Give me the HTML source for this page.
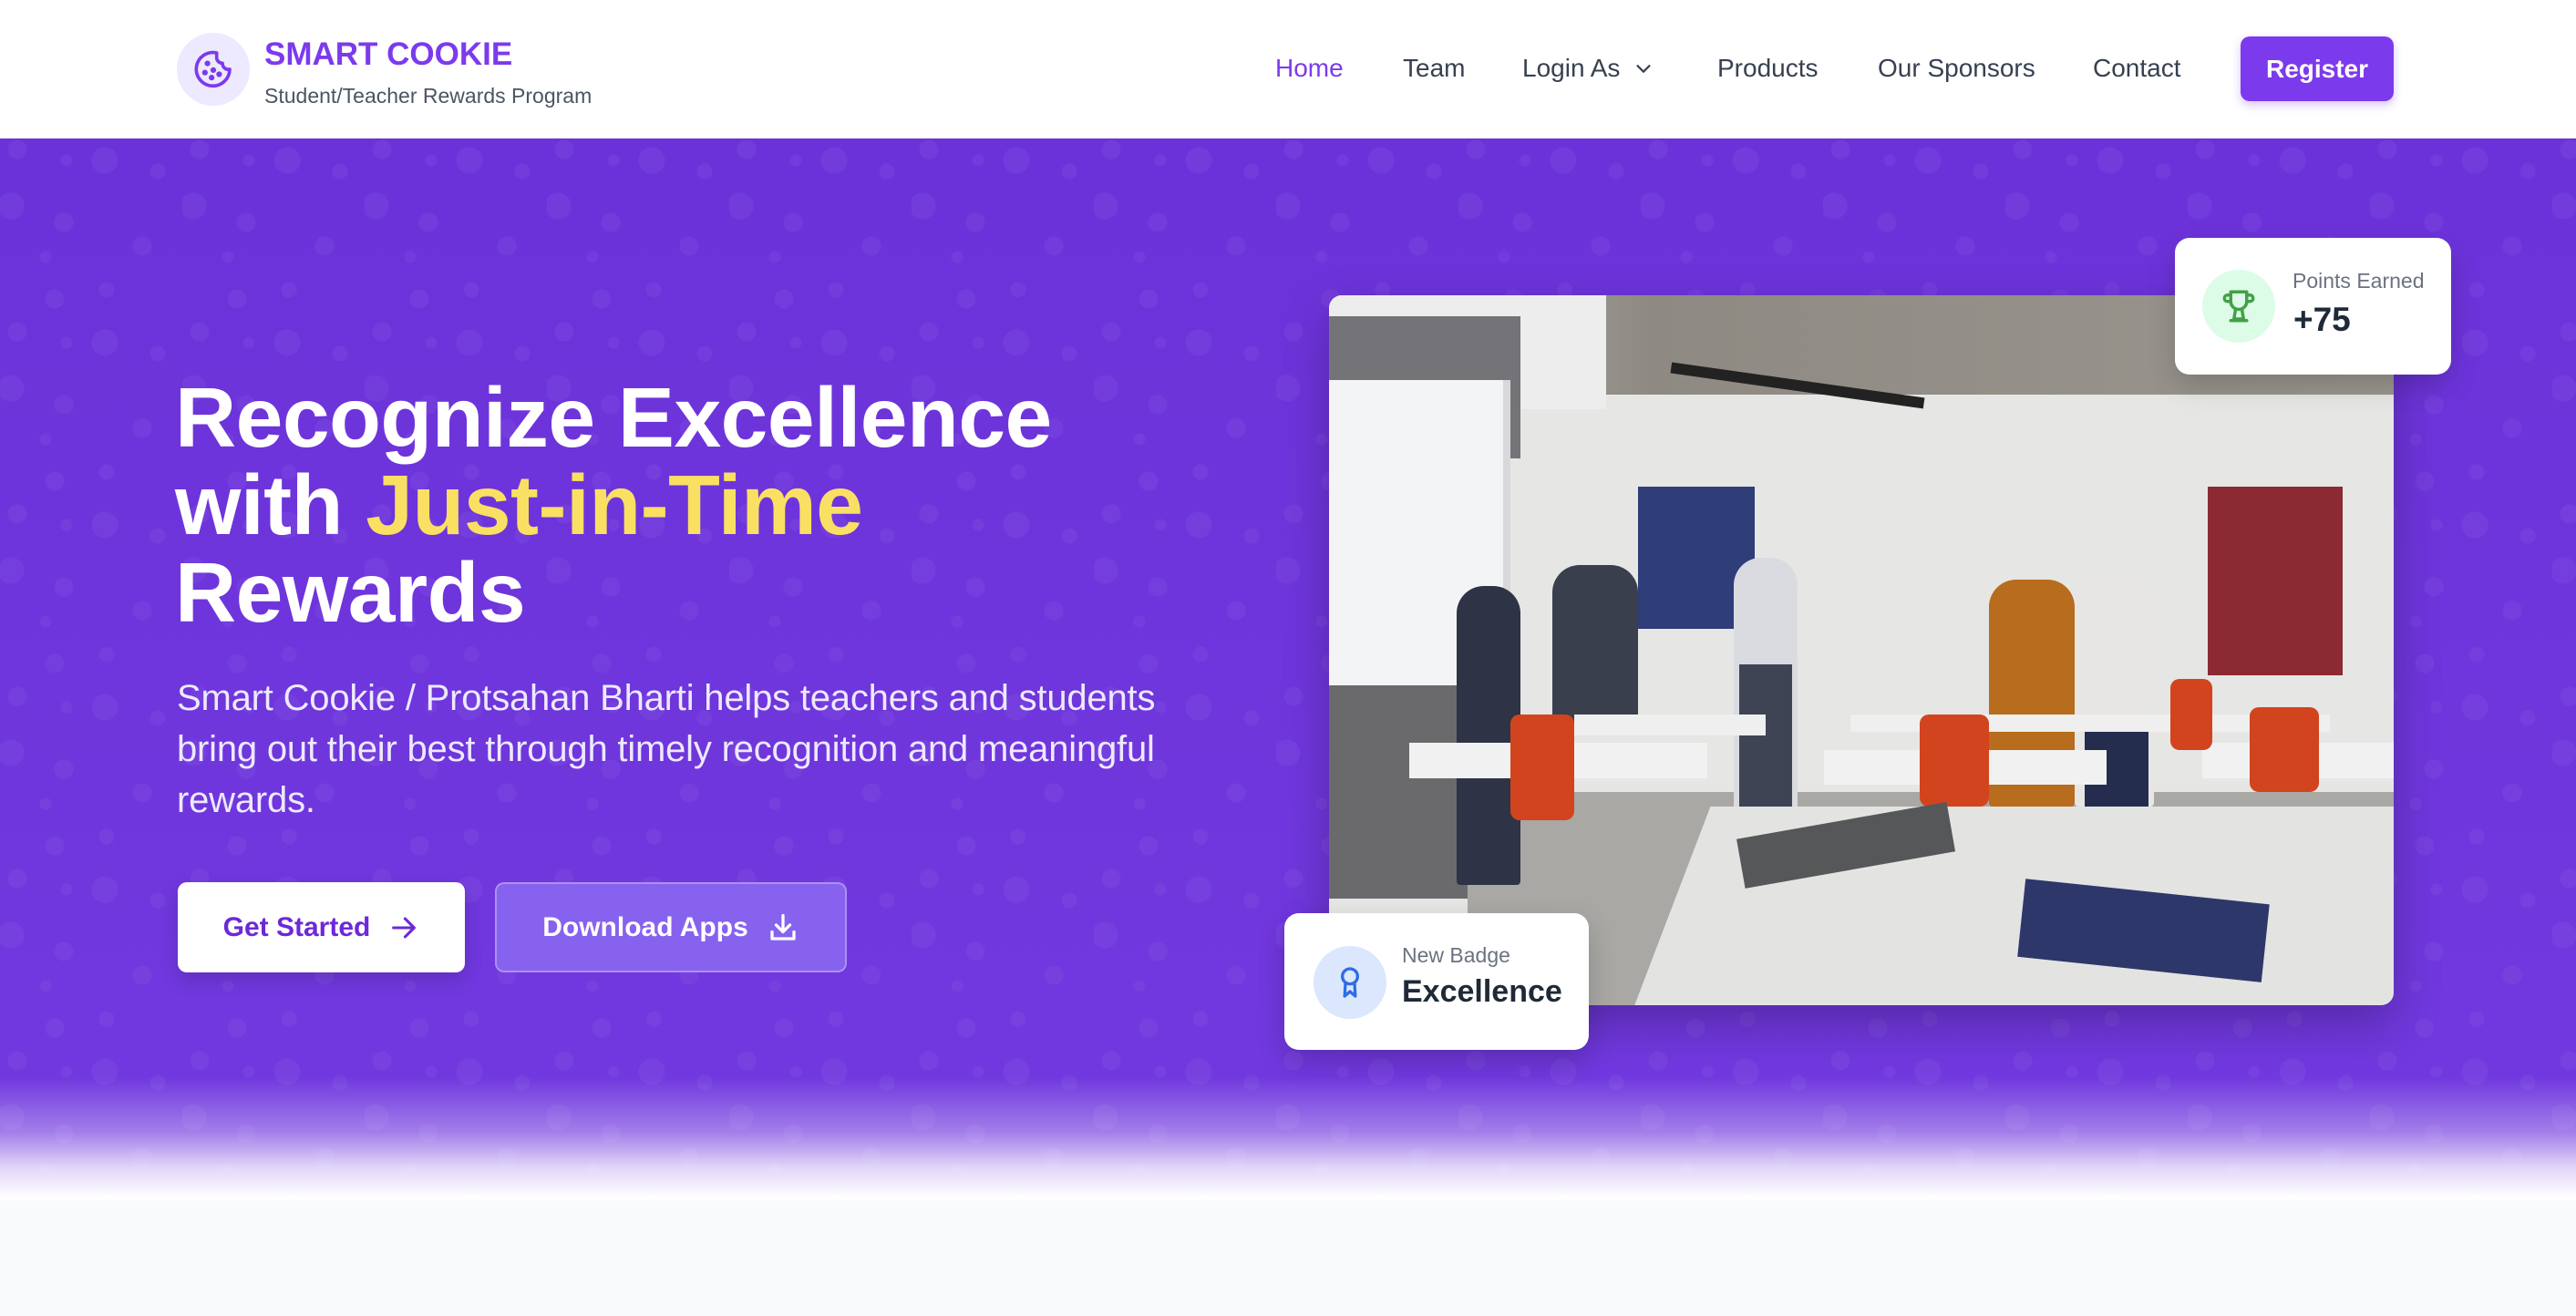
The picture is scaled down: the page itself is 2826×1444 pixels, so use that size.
<!DOCTYPE html>
<html><head><meta charset="utf-8"><style>
*{margin:0;padding:0;box-sizing:border-box}
body{width:2826px;height:1444px;overflow:hidden;background:#f9fafb;font-family:"Liberation Sans",sans-serif;position:relative}
.hdr{position:absolute;left:0;top:0;width:2826px;height:152px;background:#fff;border-bottom:1px solid #eee;z-index:5}
.hero{position:absolute;left:0;top:152px;width:2826px;height:1165px;
background:linear-gradient(180deg,rgba(255,255,255,0) 0px,rgba(255,255,255,0) 1030px,rgba(255,255,255,.35) 1090px,rgba(255,255,255,.8) 1130px,#fff 1162px),
radial-gradient(circle at 19px 12px,rgba(255,255,255,.045) 10px,transparent 11px),
radial-gradient(circle at 73px 24px,rgba(255,255,255,.045) 6px,transparent 7px),
radial-gradient(circle at 115px 24px,rgba(255,255,255,.045) 14px,transparent 15px),
radial-gradient(circle at 173px 36px,rgba(255,255,255,.045) 8px,transparent 9px),
radial-gradient(circle at 12px 74px,rgba(255,255,255,.045) 14px,transparent 15px),
radial-gradient(circle at 70px 92px,rgba(255,255,255,.045) 10px,transparent 11px),
radial-gradient(circle at 156px 118px,rgba(255,255,255,.045) 10px,transparent 11px),
radial-gradient(circle at 50px 130px,rgba(255,255,255,.045) 6px,transparent 7px),
radial-gradient(circle at 117px 166px,rgba(255,255,255,.045) 8px,transparent 9px),
radial-gradient(circle at 60px 176px,rgba(255,255,255,.045) 10px,transparent 11px),
linear-gradient(180deg,#6c32d9,#7139df);
background-size:100% 100%,200px 200px,200px 200px,200px 200px,200px 200px,200px 200px,200px 200px,200px 200px,200px 200px,200px 200px,200px 200px,100% 100%}
.a{position:absolute}
.nav{position:absolute;top:58px;font-size:28px;color:#374151;line-height:34px;white-space:nowrap}
h1{position:absolute;left:192px;top:410px;font-size:93px;line-height:96px;color:#fff;font-weight:bold;white-space:nowrap;letter-spacing:-0.5px}
.p{position:absolute;left:194px;top:738px;font-size:40px;line-height:56px;color:#ede9fe;white-space:nowrap;letter-spacing:-0.2px}
.btn{position:absolute;top:968px;height:99px;border-radius:10px;font-size:30px;font-weight:bold;display:flex;align-items:center;justify-content:center;gap:20px}
.card{position:absolute;background:#fff;border-radius:16px;box-shadow:0 12px 30px rgba(0,0,0,.18);z-index:3}
.img{position:absolute;left:1458px;top:324px;width:1168px;height:779px;border-radius:14px;overflow:hidden;background:#e6e6e4;box-shadow:0 20px 50px rgba(0,0,0,.25)}
.img div{position:absolute}
</style></head><body>
<div class="hdr">
 <div class="a" style="left:194px;top:36px;width:80px;height:80px;border-radius:50%;background:#ede9fe"></div>
 <svg class="a" style="left:212px;top:54px" width="44" height="44" viewBox="0 0 24 24" fill="none" stroke="#7c3aed" stroke-width="2" stroke-linecap="round" stroke-linejoin="round"><path d="M14 2.2A10 10 0 1 0 21.8 12a3.5 3.5 0 0 1-4.3-3.6A3.5 3.5 0 0 1 14 4.5z"/><circle cx="8.5" cy="8.5" r=".7" fill="#7c3aed"/><circle cx="15.5" cy="15" r=".7" fill="#7c3aed"/><circle cx="12" cy="12.5" r=".7" fill="#7c3aed"/><circle cx="11" cy="17" r=".7" fill="#7c3aed"/><circle cx="7" cy="14" r=".7" fill="#7c3aed"/></svg>
 <div class="a" style="left:290px;top:40px;font-size:35px;font-weight:bold;color:#7c3aed;line-height:40px">SMART COOKIE</div>
 <div class="a" style="left:290px;top:90px;font-size:23px;color:#4b5563;line-height:30px">Student/Teacher Rewards Program</div>
 <div class="nav" style="left:1399px;color:#7c3aed">Home</div>
 <div class="nav" style="left:1539px">Team</div>
 <div class="nav" style="left:1670px">Login As</div>
 <svg class="a" style="left:1792px;top:64px" width="22" height="22" viewBox="0 0 24 24" fill="none" stroke="#374151" stroke-width="2.5" stroke-linecap="round"><path d="M5 9l7 7 7-7"/></svg>
 <div class="nav" style="left:1884px">Products</div>
 <div class="nav" style="left:2060px">Our Sponsors</div>
 <div class="nav" style="left:2296px">Contact</div>
 <div class="a" style="left:2458px;top:40px;width:168px;height:71px;border-radius:10px;background:#7c3aed;color:#fff;font-size:28px;font-weight:bold;display:flex;align-items:center;justify-content:center;box-shadow:0 4px 10px rgba(124,58,237,.3)">Register</div>
</div>
<div class="hero"></div>
<h1>Recognize Excellence<br>with <span style="color:#f9e063">Just-in-Time</span><br>Rewards</h1>
<div class="p">Smart Cookie / Protsahan Bharti helps teachers and students<br>bring out their best through timely recognition and meaningful<br>rewards.</div>
<div class="btn" style="left:195px;width:315px;background:#fff;color:#6d28d9;box-shadow:0 8px 20px rgba(0,0,0,.15)">Get Started <svg width="34" height="34" viewBox="0 0 24 24" fill="none" stroke="#6d28d9" stroke-width="2.2" stroke-linecap="round" stroke-linejoin="round"><path d="M4 12h16M13 5l7 7-7 7"/></svg></div>
<div class="btn" style="left:543px;width:386px;background:#8762ee;color:#fff;border:2px solid rgba(255,255,255,.3)">Download Apps <svg width="36" height="36" viewBox="0 0 24 24" fill="none" stroke="#fff" stroke-width="2.2" stroke-linecap="round" stroke-linejoin="round"><path d="M12 3v12M7 10l5 5 5-5M4 15v5h16v-5"/></svg></div>

<div class="img">
 <div style="left:0;top:0;width:100%;height:14%;background:linear-gradient(90deg,#b8b6b2,#8e8a83 30%,#9a968f)"></div>
 <div style="left:0;top:0;width:26%;height:16%;background:#ededee"></div>
 <div style="left:0;top:3%;width:18%;height:20%;background:#747478"></div>
 <div style="left:0;top:12%;width:17%;height:43%;background:#f3f4f6;border-right:8px solid #d8d8da"></div>
 <div style="left:0;top:55%;width:13%;height:30%;background:#6a6a6d"></div>
 <div style="left:32%;top:12%;width:24%;height:1.5%;background:#222;transform:rotate(8deg)"></div>
 <div style="left:13%;top:70%;width:87%;height:30%;background:#a9a8a5"></div>
 <div style="left:29%;top:27%;width:11%;height:20%;background:#2f3d78"></div>
 <div style="left:82.5%;top:27%;width:12.7%;height:26.5%;background:#8b2a33"></div>
 <div style="left:12%;top:41%;width:6%;height:42%;background:#2e3346;border-radius:30px 30px 4px 4px"></div>
 <div style="left:21%;top:38%;width:8%;height:24%;background:#3a3f4e;border-radius:30px 30px 4px 4px"></div>
 <div style="left:38%;top:37%;width:6%;height:36%;background:#d9dbe0;border-radius:30px 30px 4px 4px"></div>
 <div style="left:38.5%;top:52%;width:5%;height:21%;background:#3e4454"></div>
 <div style="left:62%;top:40%;width:8%;height:32%;background:#b76c1e;border-radius:30px 30px 4px 4px"></div>
 <div style="left:70%;top:39%;width:7.5%;height:33%;background:#e8e6e4;border-radius:30px 30px 4px 4px"></div>
 <div style="left:71%;top:60%;width:6%;height:12%;background:#252d4f"></div>
 <div style="left:7.5%;top:63%;width:28%;height:5%;background:#f1f1f1"></div>
 <div style="left:23%;top:59%;width:18%;height:3%;background:#efefef"></div>
 <div style="left:46.5%;top:64%;width:26.5%;height:5%;background:#f1f1f1"></div>
 <div style="left:49%;top:59%;width:45%;height:2.5%;background:#efefef"></div>
 <div style="left:82%;top:63%;width:18%;height:5%;background:#f1f1f1"></div>
 <div style="left:17%;top:59%;width:6%;height:15%;background:#d2441e;border-radius:10px"></div>
 <div style="left:55.5%;top:59%;width:6.5%;height:13%;background:#d2441e;border-radius:10px"></div>
 <div style="left:86.5%;top:58%;width:6.5%;height:12%;background:#d2441e;border-radius:10px"></div>
 <div style="left:79%;top:54%;width:4%;height:10%;background:#d2441e;border-radius:10px"></div>
 <div style="left:28.7%;top:72%;width:71.3%;height:28%;background:#e3e3e1;clip-path:polygon(10% 0,100% 0,100% 100%,0 100%)"></div>
 <div style="left:38.5%;top:74%;width:20%;height:7%;background:#555759;transform:rotate(-10deg)"></div>
 <div style="left:65%;top:84%;width:23%;height:11%;background:#2d3769;transform:rotate(6deg)"></div>
</div>

<div class="card" style="left:2386px;top:261px;width:303px;height:150px">
 <div class="a" style="left:30px;top:35px;width:80px;height:80px;border-radius:50%;background:#dcfce7"></div>
 <svg class="a" style="left:49px;top:54px" width="42" height="42" viewBox="0 0 24 24" fill="none" stroke="#43a047" stroke-width="2" stroke-linecap="round" stroke-linejoin="round"><path d="M7 3h10v6a5 5 0 0 1-10 0z"/><path d="M7 5H5a2 2 0 0 0 0 4h2M17 5h2a2 2 0 0 1 0 4h-2"/><path d="M10 14l-1 6h6l-1-6M7 21h10"/></svg>
 <div class="a" style="left:129px;top:34px;font-size:23px;color:#6b7280">Points Earned</div>
 <div class="a" style="left:130px;top:69px;font-size:37px;font-weight:bold;color:#1f2937">+75</div>
</div>
<div class="card" style="left:1409px;top:1002px;width:334px;height:150px">
 <div class="a" style="left:32px;top:36px;width:80px;height:80px;border-radius:50%;background:#dbe7fc"></div>
 <svg class="a" style="left:52px;top:56px" width="40" height="40" viewBox="0 0 24 24" fill="none" stroke="#2f6ce5" stroke-width="2" stroke-linecap="round" stroke-linejoin="round"><circle cx="12" cy="8" r="5"/><path d="M9 12.5L8.5 21l3.5-3 3.5 3-.5-8.5"/></svg>
 <div class="a" style="left:129px;top:33px;font-size:23px;color:#6b7280">New Badge</div>
 <div class="a" style="left:129px;top:67px;font-size:34px;font-weight:bold;color:#1f2937">Excellence</div>
</div>
</body></html>
